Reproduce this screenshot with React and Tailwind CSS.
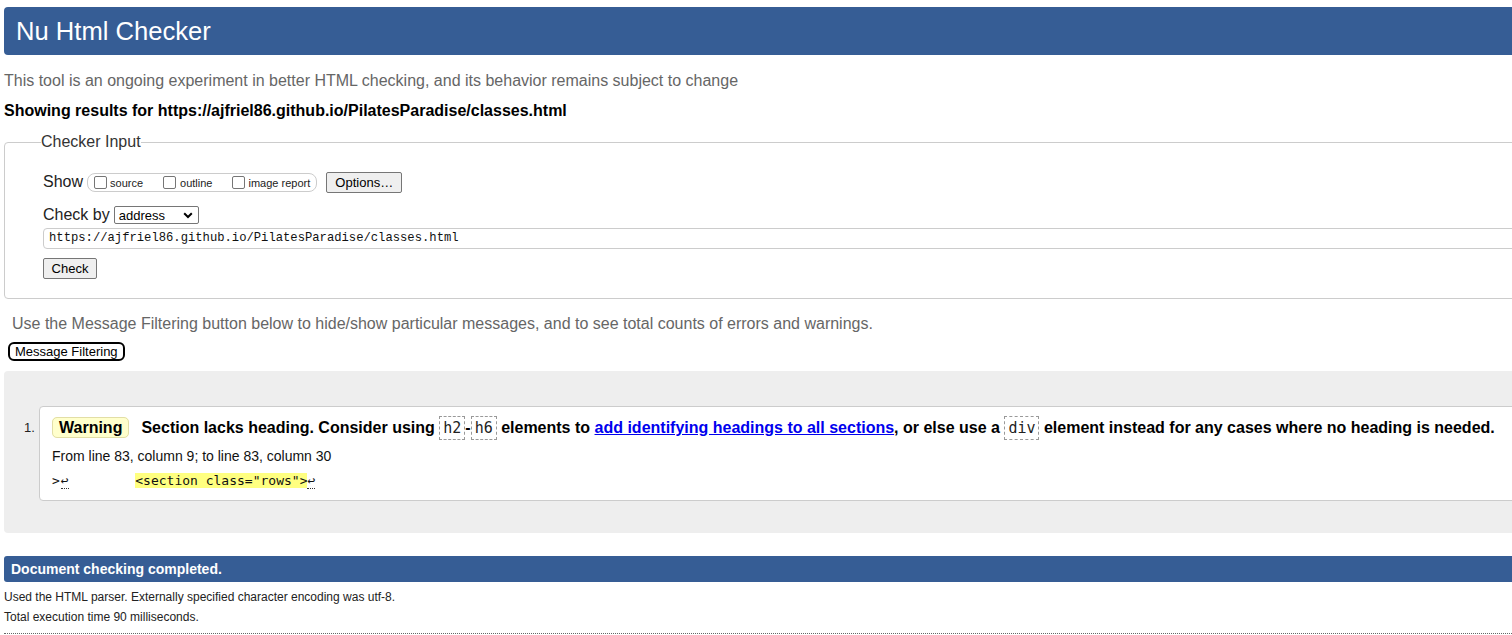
import React from "react";

const sans = "font-['Liberation_Sans',Arial,sans-serif]";
const mono = "font-['Liberation_Mono','DejaVu_Sans_Mono',monospace]";

function Box() {
  return (
    <span className="inline-block w-[13px] h-[13px] rounded-[2px] border border-[#767676] bg-white shrink-0" />
  );
}

function Code({ children }) {
  return (
    <code className="font-['DejaVu_Sans_Mono',monospace] font-normal text-[15px] border border-dashed border-[#999] px-[3px] py-[2px] text-[#222]">
      {children}
    </code>
  );
}

export default function App() {
  return (
    <div className={`w-[1512px] h-[635px] overflow-hidden bg-white ${sans}`}>
      <div className="w-[1640px] pl-[4px] pt-[7px]">
        {/* Header */}
        <div className="h-[48px] bg-[#365d95] rounded-l-[4px] flex items-center pl-[12px]">
          <h1 className="text-white text-[25.6px] leading-[30px] font-normal">Nu Html Checker</h1>
        </div>

        <p className="mt-[17px] text-[16px] leading-[18px] text-[#666]">
          This tool is an ongoing experiment in better HTML checking, and its behavior remains subject to change
        </p>
        <p className="mt-[12px] text-[16px] leading-[18px] font-bold text-black">
          Showing results for https://ajfriel86.github.io/PilatesParadise/classes.html
        </p>

        {/* Checker input fieldset */}
        <fieldset className="mt-[13px] border border-[#ccc] rounded-[4px] pl-[36px] pb-[19px]">
          <legend className="text-[16px] leading-[18px] text-[#333] px-0">Checker Input</legend>
          <div className="ml-[2px]">
            <div className="mt-[20px] h-[22px] flex items-center">
              <span className="text-[16px] leading-[18px] text-[#222]">Show</span>
              <div className="ml-[4px] h-[19px] flex items-center border border-[#ccc] rounded-[8px] pl-[6px] pr-[6px]">
                <Box />
                <span className="ml-[3px] mt-[3px] text-[11px] leading-[13px] text-[#222]">source</span>
                <span className="ml-[20px] flex items-center">
                  <Box />
                  <span className="ml-[4px] mt-[3px] text-[11px] leading-[13px] text-[#222]">outline</span>
                </span>
                <span className="ml-[20px] flex items-center">
                  <Box />
                  <span className="ml-[3px] mt-[3px] text-[11px] leading-[13px] text-[#222]">image report</span>
                </span>
              </div>
              <button className="ml-[9px] w-[76px] h-[21px] bg-[#efefef] border border-[#767676] rounded-[2px] text-[13px] leading-[15px] text-black">
                Options…
              </button>
            </div>

            <div className="mt-[11px] h-[22px] flex items-center">
              <span className="text-[16px] leading-[18px] text-[#222]">Check by</span>
              <div className="ml-[4px] w-[85px] h-[18px] border border-[#767676] rounded-[2px] bg-white flex items-center justify-between pl-[4px] pr-[4px]">
                <span className="text-[13px] leading-[15px] text-black">address</span>
                <svg width="10" height="7" viewBox="0 0 10 7" className="mr-[1px]">
                  <path d="M1.2 1.3 L5 5 L8.8 1.3" fill="none" stroke="#000" strokeWidth="2" />
                </svg>
              </div>
            </div>

            <div className={`mt-[2px] h-[21px] border border-[#ccc] rounded-[4px] flex items-center pl-[5px] ${mono} text-[12.2px] text-[#111]`}>
              https://ajfriel86.github.io/PilatesParadise/classes.html
            </div>

            <button className="block mt-[9px] w-[54px] h-[21px] bg-[#efefef] border border-[#767676] rounded-[2px] text-[13px] leading-[15px] text-black">
              Check
            </button>
          </div>
        </fieldset>

        <p className="mt-[16px] ml-[8px] text-[16px] leading-[18px] text-[#666]">
          Use the Message Filtering button below to hide/show particular messages, and to see total counts of errors and warnings.
        </p>
        <button className="block mt-[9px] ml-[4px] h-[19px] px-[5px] border-2 border-black rounded-[6px] text-[13px] leading-[13px] text-black bg-white">
          Message Filtering
        </button>

        {/* Results panel */}
        <div className="mt-[10px] bg-[#eeeeee] rounded-l-[4px] pt-[35px] pb-[32px] pl-[20px] flex items-start">
          <span className="w-[15px] mt-[14px] text-[13px] leading-[15px] text-[#222]">1.</span>
          <div className="flex-1 bg-white border border-[#ccc] rounded-l-[4px] pl-[12px] pt-[9px] pb-[10px]">
            <div className="text-[16px] leading-[24px] font-bold text-black whitespace-nowrap">
              <span className="bg-[#ffffcc] border border-[#e2dea6] rounded-[5px] px-[6px] py-[1px]">Warning</span>
              <span className="ml-[12px]">Section lacks heading. Consider using </span>
              <Code>h2</Code>-<Code>h6</Code>
              <span> elements to </span>
              <a className="text-[#0000ee] underline">add identifying headings to all sections</a>
              <span>, or else use a </span>
              <Code>div</Code>
              <span> element instead for any cases where no heading is needed.</span>
            </div>
            <div className="mt-[7px] text-[14px] leading-[18px] text-[#111]">
              From line 83, column 9; to line 83, column 30
            </div>
            <div className="mt-[7px] h-[18px] font-['DejaVu_Sans_Mono',monospace] text-[13px] leading-[18px] text-[#111] whitespace-pre">
              <span>&gt;</span>
              <span className="border-b border-dotted border-[#333] ml-[1px]">↩</span>
              <span>        </span>
              <span className="ml-[4px] bg-[#ffff80]">&lt;section class="rows"&gt;</span>
              <span className="border-b border-dotted border-[#333]">↩</span>
            </div>
          </div>
        </div>

        {/* Completed bar */}
        <div className="mt-[23px] h-[26px] bg-[#365d95] rounded-l-[3px] flex items-center pl-[7px]">
          <span className="text-white font-bold text-[14px] leading-[16px]">Document checking completed.</span>
        </div>
        <p className="mt-[8px] text-[12px] leading-[14px] text-[#222]">
          Used the HTML parser. Externally specified character encoding was utf-8.
        </p>
        <p className="mt-[6px] text-[12px] leading-[14px] text-[#222]">
          Total execution time 90 milliseconds.
        </p>
        <div className="mt-[9px] border-t border-dotted border-[#666]" />
      </div>
    </div>
  );
}
